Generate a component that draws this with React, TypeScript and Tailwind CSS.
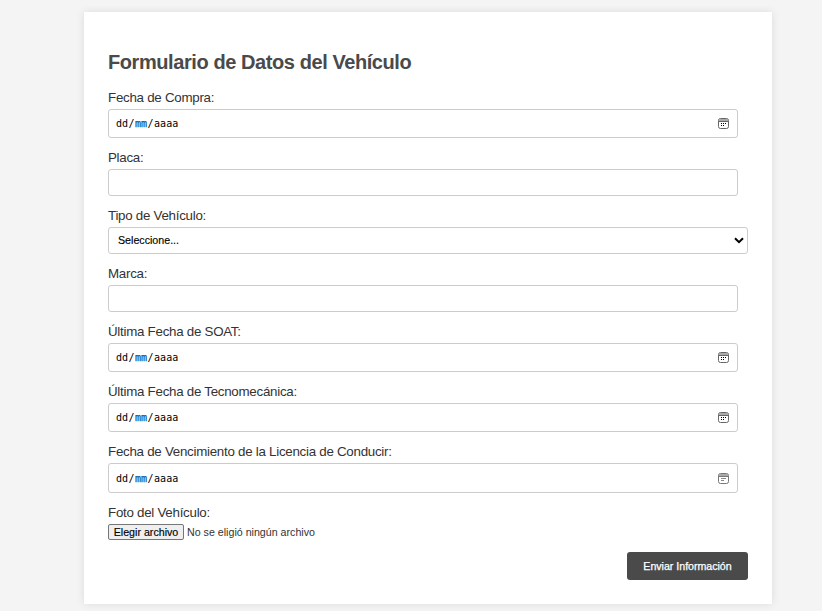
import type { ReactNode } from "react";

const box = "rounded-[3px] border border-[#ccc] bg-white";

function Field({ label, children }: { label: string; children: ReactNode }) {
  return (
    <div className="mb-3">
      <div className="mb-1 h-[15px] whitespace-nowrap text-[13.33px] leading-[15px] tracking-[-0.265px] text-[#333]">{label}</div>
      {children}
    </div>
  );
}

function CalendarIcon({ faint }: { faint: boolean }) {
  return (
    <svg width="11" height="11" viewBox="0 0 11 11" fill="none">
      <rect x="0.5" y="0.5" width="10" height="10" rx="2" stroke={faint ? "#777" : "#666"} />
      <path d="M1 1h9v2H1z" fill="#aaa" />
      <path d="M1 3.5h9" stroke={faint ? "#777" : "#666"} />
      {faint ? (
        <path d="M3 5h5v1H3zM3 7h3v1H3z" fill="#888" />
      ) : (
        <path d="M3 5h1v1H3zM5 5h1v1H5zM7 5h1v1H7zM3 7h1v1H3zM5 7h1v1H5z" fill="#000" />
      )}
    </svg>
  );
}

function DateBox({ tall = false }: { tall?: boolean }) {
  return (
    <div className={`${box} flex w-[630px] items-center justify-between pl-[7px] pr-[8px] ${tall ? "h-[30px]" : "h-[29px]"}`}>
      <div className={`flex font-['DejaVu_Sans_Mono',monospace] text-[10px] leading-3 text-black ${tall ? "pt-px" : ""}`}>
        <span>dd</span>
        <span className="w-[7px] text-center">/</span>
        <span className="text-[#084f98] [-webkit-text-stroke:0.25px_#0a5fb0]">mm</span>
        <span className="w-[7px] text-center">/</span>
        <span>aaaa</span>
      </div>
      <CalendarIcon faint={tall} />
    </div>
  );
}

export default function App() {
  return (
    <div className="h-[611px] overflow-hidden bg-[#f4f4f4] pl-[84px] pt-3 font-['Liberation_Sans',Arial,sans-serif]">
      <main className="h-[592px] w-[688px] bg-white px-6 pt-[39px] shadow-[0_0_8px_rgba(0,0,0,0.1)]">
        <h2 className="mb-4 h-[23px] whitespace-nowrap text-[20px] font-bold leading-[23px] tracking-[-0.42px] text-[#4a4a4a]">
          Formulario de Datos del Vehículo
        </h2>
        <Field label="Fecha de Compra:"><DateBox /></Field>
        <Field label="Placa:"><div className={`${box} h-[27px] w-[630px]`} /></Field>
        <Field label="Tipo de Vehículo:">
          <div className={`${box} flex h-[27px] w-[640px] items-center justify-between pl-[9px] pr-[3px] text-[10.67px] text-black`}>
            <span className="pb-px leading-3 [-webkit-text-stroke:0.15px_#000]">Seleccione...</span>
            <svg width="10" height="7" viewBox="0 0 10 7" fill="none">
              <path d="M1 1.2l4 4 4-4" stroke="#000" strokeWidth="2" />
            </svg>
          </div>
        </Field>
        <Field label="Marca:"><div className={`${box} h-[27px] w-[630px]`} /></Field>
        <Field label="Última Fecha de SOAT:"><DateBox /></Field>
        <Field label="Última Fecha de Tecnomecánica:"><DateBox /></Field>
        <Field label="Fecha de Vencimiento de la Licencia de Conducir:"><DateBox tall /></Field>
        <Field label="Foto del Vehículo:">
          <div className="flex h-4 items-center text-[10.67px] leading-[14px] text-[#333]">
            <button className="h-4 w-[76px] whitespace-nowrap rounded-[2px] border border-[#767676] bg-[#efefef] text-center leading-[14px] text-black [-webkit-text-stroke:0.15px_#000]">
              Elegir archivo
            </button>
            <span className="ml-[3px]">No se eligió ningún archivo</span>
          </div>
        </Field>
        <div className="flex justify-end">
          <button className="h-7 w-[121px] whitespace-nowrap rounded-[3px] bg-[#4a4a4a] text-[10.67px] tracking-[-0.03px] text-white [-webkit-text-stroke:0.25px_#fff]">
            Enviar Información
          </button>
        </div>
      </main>
    </div>
  );
}
